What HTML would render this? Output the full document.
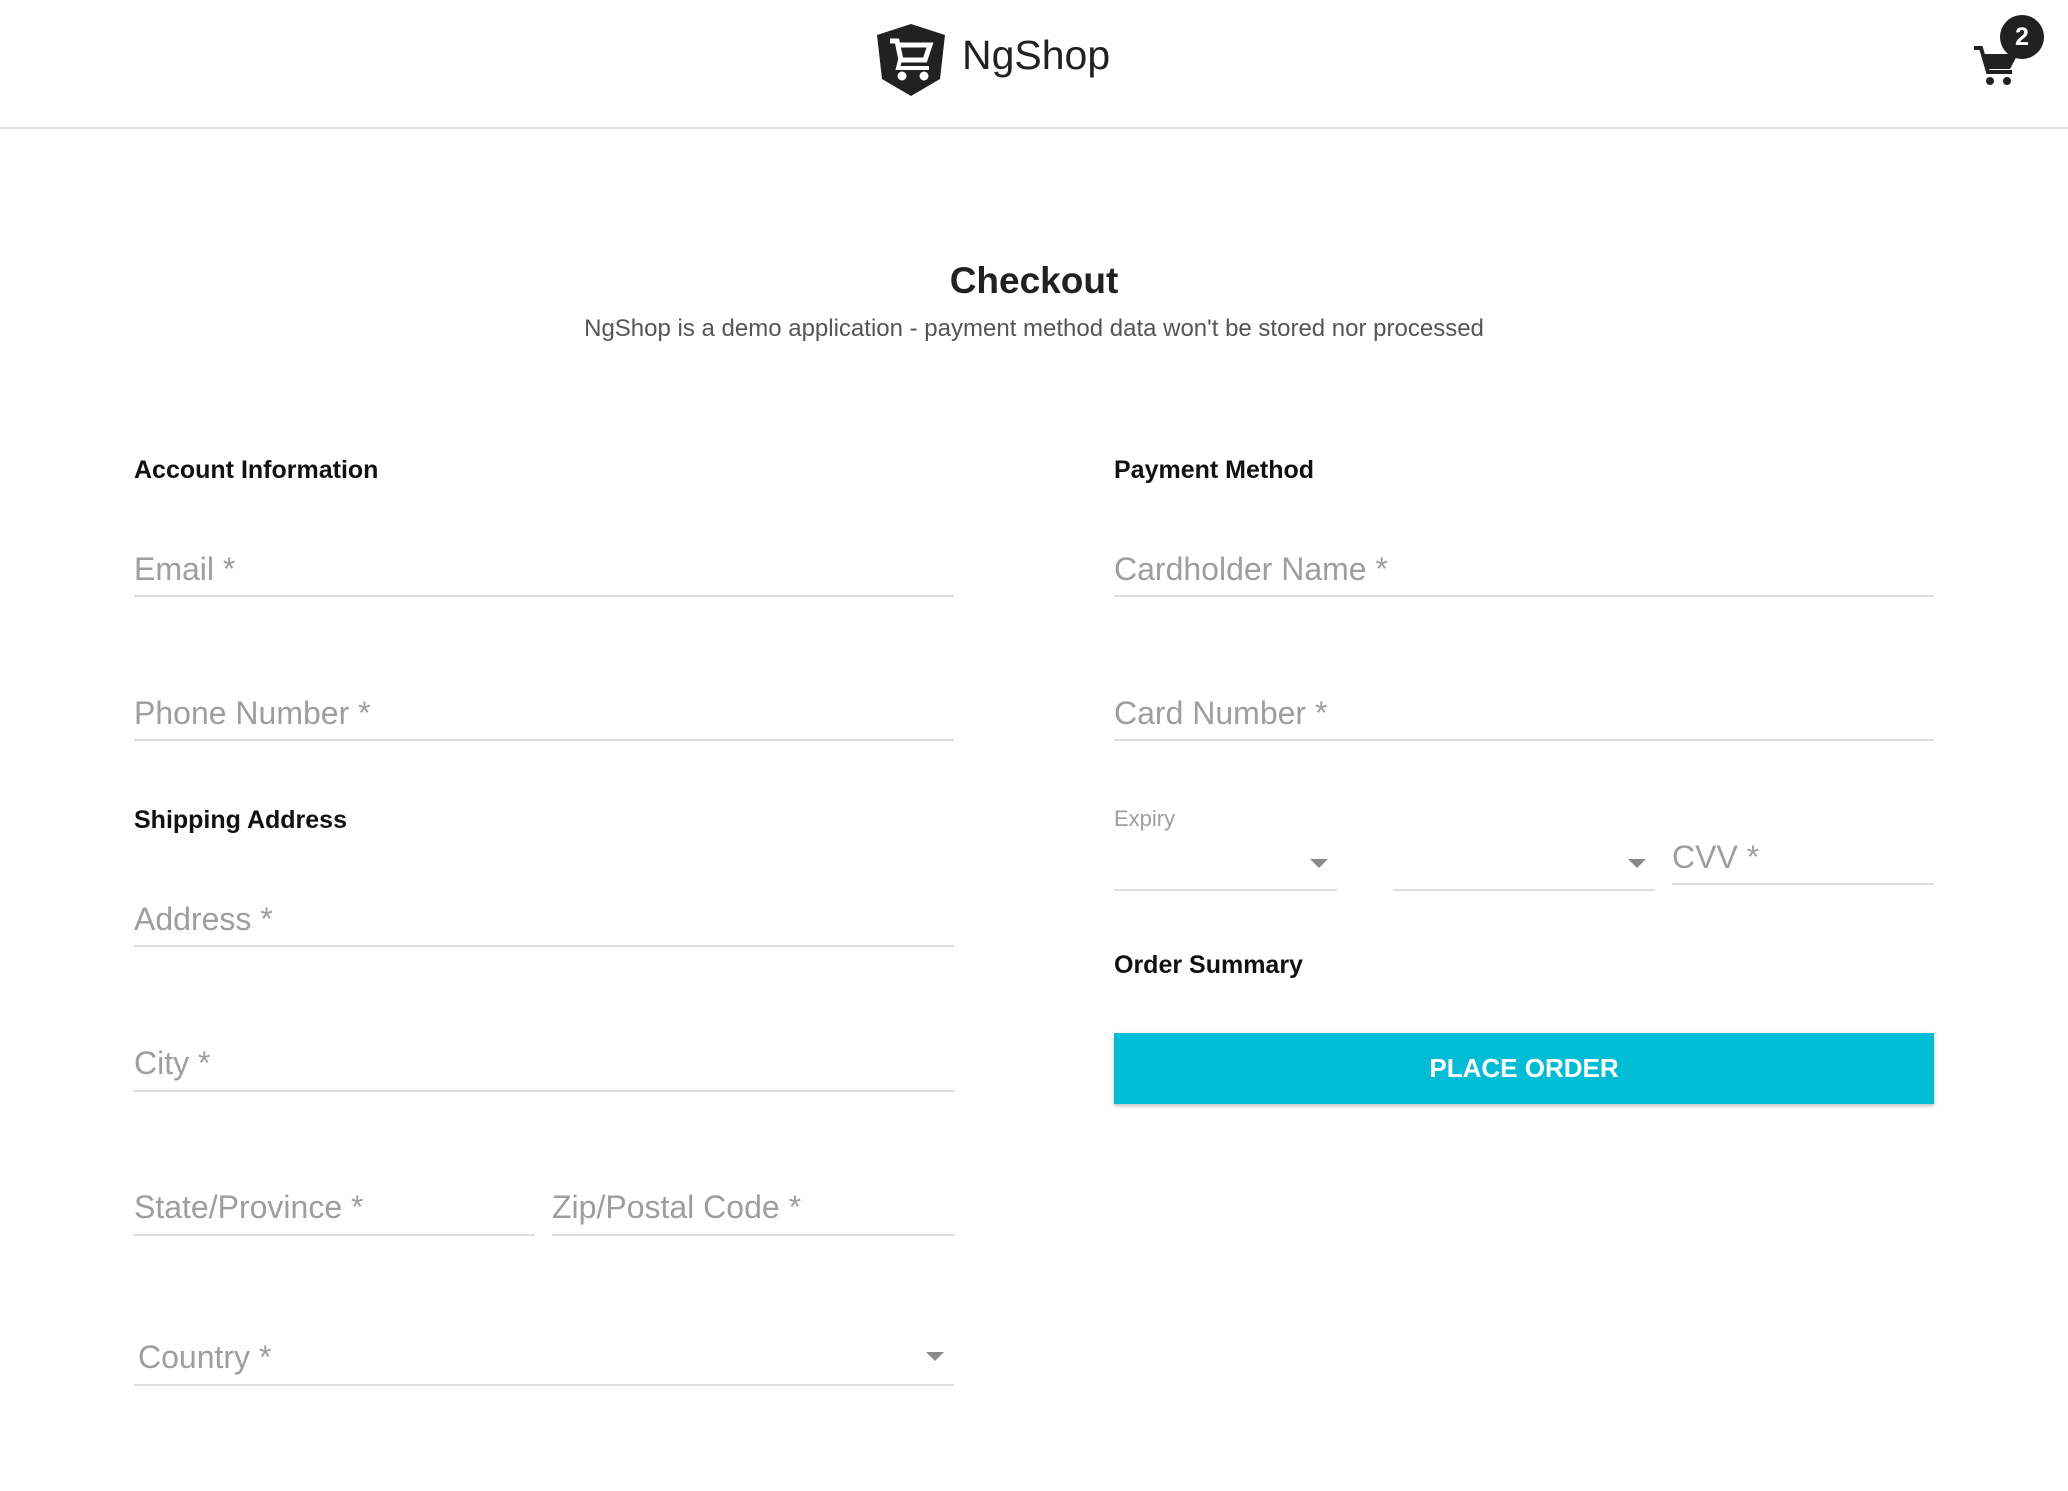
<!DOCTYPE html>
<html><head><meta charset="utf-8"><style>
*{margin:0;padding:0;box-sizing:border-box}
body{width:2068px;height:1491px;background:#fff;font-family:"Liberation Sans",Arial,sans-serif;position:relative;overflow:hidden;color:#212121}
.a{position:absolute;white-space:nowrap}
.h{font-size:25px;font-weight:bold;line-height:25px;color:#111}
.ph{font-size:32px;line-height:32px;color:#9e9e9e}
.ln{position:absolute;height:2px;background:#dedede}
.tri{position:absolute;width:0;height:0;border-left:9px solid transparent;border-right:9px solid transparent;border-top:9px solid #8a8a8a}
</style></head><body>
<div class="ln" style="left:0;top:127px;width:2068px;background:#e0e0e0"></div>
<svg class="a" style="left:877px;top:24px" width="68" height="72" viewBox="0 0 68 72">
<path d="M34 0 L68 11 L63 55 L34 72 L5 55 L0 11 Z" fill="#212121"/>
<path d="M13 17 H20 L24 36 H48 L53 21 H22" fill="none" stroke="#fff" stroke-width="5"/>
<path d="M23 36 L21 44 H52" fill="none" stroke="#fff" stroke-width="4"/>
<circle cx="25" cy="52" r="4.5" fill="#fff"/><circle cx="47" cy="52" r="4.5" fill="#fff"/>
</svg>
<div class="a" style="left:962px;top:35px;font-size:41px;line-height:40px;font-weight:500;color:#212121">NgShop</div>
<svg class="a" style="left:1972px;top:44px" width="48" height="44" viewBox="0 0 48 44">
<path d="M2 4 H9 L16 28 H40" fill="none" stroke="#212121" stroke-width="4"/>
<path d="M11 10 H46 L38 25 H16 Z" fill="#212121"/>
<circle cx="18" cy="37" r="4" fill="#212121"/><circle cx="35" cy="37" r="4" fill="#212121"/>
</svg>
<div class="a" style="left:2000px;top:15px;width:44px;height:44px;border-radius:50%;background:#212121;color:#fff;font-size:25px;font-weight:bold;line-height:44px;text-align:center">2</div>
<div class="a" style="left:0;width:2068px;text-align:center;top:261px;font-size:37px;line-height:40px;font-weight:bold;color:#212121">Checkout</div>
<div class="a" style="left:0;width:2068px;text-align:center;top:316px;font-size:24px;line-height:26px;color:#555">NgShop is a demo application - payment method data won't be stored nor processed</div>

<div class="a h" style="left:134px;top:458px">Account Information</div>
<div class="a ph" style="left:134px;top:553px">Email *</div><div class="ln" style="left:134px;top:595px;width:820px"></div>
<div class="a ph" style="left:134px;top:697px">Phone Number *</div><div class="ln" style="left:134px;top:739px;width:820px"></div>
<div class="a h" style="left:134px;top:808px">Shipping Address</div>
<div class="a ph" style="left:134px;top:903px">Address *</div><div class="ln" style="left:134px;top:945px;width:820px"></div>
<div class="a ph" style="left:134px;top:1047px">City *</div><div class="ln" style="left:134px;top:1090px;width:820px"></div>
<div class="a ph" style="left:134px;top:1191px">State/Province *</div><div class="ln" style="left:134px;top:1234px;width:401px"></div>
<div class="a ph" style="left:552px;top:1191px">Zip/Postal Code *</div><div class="ln" style="left:552px;top:1234px;width:402px"></div>
<div class="a ph" style="left:138px;top:1341px">Country *</div><div class="ln" style="left:134px;top:1384px;width:820px"></div>
<div class="tri" style="left:926px;top:1352px"></div>

<div class="a h" style="left:1114px;top:458px">Payment Method</div>
<div class="a ph" style="left:1114px;top:553px">Cardholder Name *</div><div class="ln" style="left:1114px;top:595px;width:820px"></div>
<div class="a ph" style="left:1114px;top:697px">Card Number *</div><div class="ln" style="left:1114px;top:739px;width:820px"></div>
<div class="a" style="left:1114px;top:808px;font-size:22px;line-height:22px;color:#9e9e9e">Expiry</div>
<div class="tri" style="left:1310px;top:859px"></div><div class="ln" style="left:1114px;top:889px;width:223px"></div>
<div class="tri" style="left:1628px;top:859px"></div><div class="ln" style="left:1393px;top:889px;width:262px"></div>
<div class="a ph" style="left:1672px;top:841px">CVV *</div><div class="ln" style="left:1672px;top:883px;width:262px"></div>
<div class="a h" style="left:1114px;top:953px">Order Summary</div>
<div class="a" style="left:1114px;top:1033px;width:820px;height:71px;background:#00bcd4;box-shadow:0 2px 4px rgba(0,0,0,.25);color:#fff;font-size:26px;font-weight:bold;line-height:71px;text-align:center">PLACE ORDER</div>
</body></html>
